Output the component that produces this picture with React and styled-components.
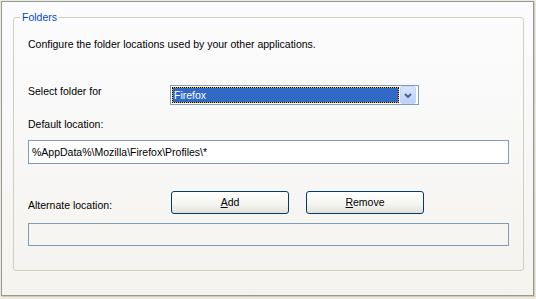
import React from 'react';
import styled, { createGlobalStyle } from 'styled-components';

const GlobalStyle = createGlobalStyle`
  html, body {
    margin: 0;
    padding: 0;
    background: #ece9d8;
  }
  body {
    font-family: "Liberation Sans", Arial, sans-serif;
    font-size: 10.5px;
    color: #000;
  }
`;

const Page = styled.div`
  width: 536px;
  height: 299px;
  box-sizing: border-box;
  padding: 1px 2px 3px 1px;
  background: #ece9d8;
`;

const TabPage = styled.div`
  height: 100%;
  box-sizing: border-box;
  border: 1px solid #919b9c;
  box-shadow: 1px 1px 0 #d0cdbf;
  background: linear-gradient(#fcfcfe, #f4f3ee);
  padding: 9px 11px 0 11px;
`;

const Group = styled.fieldset`
  margin: 0;
  height: 260px;
  box-sizing: border-box;
  border: 1px solid #d0d0bf;
  border-radius: 3px;
  padding: 0 14px;
  display: flex;
  flex-direction: column;
`;

const Legend = styled.legend`
  color: #0046d5;
  padding: 0 2px;
  margin-left: -8px;
  line-height: 13px;
`;

const Text = styled.div`
  line-height: 13px;
  margin-top: ${p => p.$top}px;
  white-space: nowrap;
`;

const Row = styled.div`
  display: flex;
  align-items: flex-start;
  margin-top: ${p => p.$top}px;
`;

const RowLabel = styled.div`
  width: ${p => p.$width}px;
  line-height: 13px;
  padding-top: ${p => p.$pad}px;
  flex-shrink: 0;
`;

const Select = styled.div`
  width: 249px;
  height: 20px;
  box-sizing: border-box;
  border: 1px solid #7f9db9;
  background: #fff;
  display: flex;
  align-items: center;
  padding: 0 2px 0 1px;
  gap: 1px;
`;

const Selected = styled.div`
  flex: 1;
  height: 16px;
  box-sizing: border-box;
  border: 1px dotted #000;
  background: linear-gradient(#316ac5, #316ac5) padding-box,
    linear-gradient(#d8bb45, #d8bb45) border-box;
  color: #fff;
  line-height: 14px;
  padding-left: 1px;
`;

const DropButton = styled.div`
  width: 16px;
  height: 18px;
  box-sizing: border-box;
  border: 1px solid #c3d3fd;
  border-radius: 2px;
  background: linear-gradient(#dae6fe, #bccffa);
  display: flex;
  align-items: center;
  justify-content: center;
`;

const TextBox = styled.div`
  width: 481px;
  height: ${p => p.$height}px;
  box-sizing: border-box;
  border: 1px solid #7f9db9;
  background: ${p => (p.$empty ? 'transparent' : '#fff')};
  margin-top: ${p => p.$top}px;
  padding: 0 3px;
  line-height: ${p => p.$height - 2}px;
  white-space: nowrap;
`;

const Buttons = styled.div`
  display: flex;
  gap: 17px;
`;

const Button = styled.button`
  width: 118px;
  height: 23px;
  box-sizing: border-box;
  border: 1px solid #003c74;
  border-radius: 3px;
  background: linear-gradient(#ffffff 0%, #f4f4f0 60%, #e3e1d8 100%);
  font-family: "Liberation Sans", Arial, sans-serif;
  font-size: 10.5px;
  color: #000;
  padding: 0;
  line-height: 21px;

  u {
    text-decoration: underline;
  }
`;

export default function App() {
  return (
    <>
      <GlobalStyle />
      <Page>
        <TabPage>
          <Group>
            <Legend>Folders</Legend>
            <Text $top={14}>Configure the folder locations used by your other applications.</Text>
            <Row $top={34}>
              <RowLabel $width={142} $pad={0}>Select folder for</RowLabel>
              <Select>
                <Selected>Firefox</Selected>
                <DropButton>
                  <svg width="8" height="5" viewBox="0 0 8 5">
                    <polyline points="1,1 4,4 7,1" fill="none" stroke="#4d6185" strokeWidth="2" />
                  </svg>
                </DropButton>
              </Select>
            </Row>
            <Text $top={13}>Default location:</Text>
            <TextBox $top={9} $height={24}>%AppData%\Mozilla\Firefox\Profiles\*</TextBox>
            <Row $top={27}>
              <RowLabel $width={143} $pad={8}>Alternate location:</RowLabel>
              <Buttons>
                <Button><u>A</u>dd</Button>
                <Button><u>R</u>emove</Button>
              </Buttons>
            </Row>
            <TextBox $top={9} $height={23} $empty />
          </Group>
        </TabPage>
      </Page>
    </>
  );
}
